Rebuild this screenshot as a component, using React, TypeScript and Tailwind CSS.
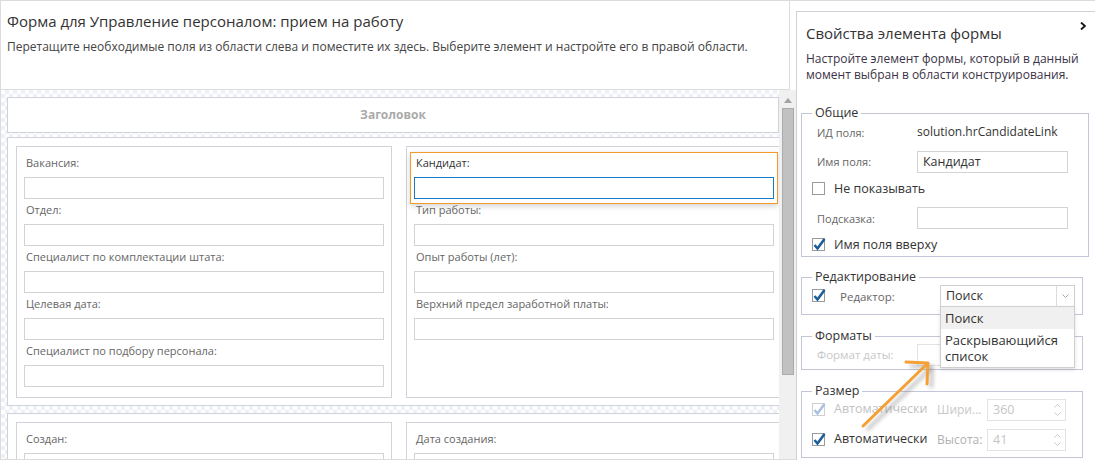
import React from "react";

const leftFields = [
  "Вакансия:",
  "Отдел:",
  "Специалист по комплектации штата:",
  "Целевая дата:",
  "Специалист по подбору персонала:",
];
const rightFields = ["Тип работы:", "Опыт работы (лет):", "Верхний предел заработной платы:"];

function Field({ label, selected }: { label: string; selected?: boolean }) {
  return (
    <div className="relative">
      {selected && (
        <div className="absolute -left-[4px] -right-[4px] top-0 -bottom-[5px] border border-[#f39a2b] shadow-[0_2px_6px_rgba(0,0,0,0.18)]" />
      )}
      <div className={`relative h-[25px] pt-[3px] pl-[2px] text-[11px] leading-[16px] ${selected ? "text-[#333]" : "text-[#666]"}`}>
        {label}
      </div>
      <div className={`relative h-[22px] bg-white border ${selected ? "border-[#1b79c4]" : "border-[#d3d3d3]"}`} />
    </div>
  );
}

function Column({ children }: { children: React.ReactNode }) {
  return <div className="w-[376px] h-[252px] shrink-0 border border-[#d0d3d9] bg-white pt-[5px] px-[7px]">{children}</div>;
}

function Check({ checked, disabled }: { checked?: boolean; disabled?: boolean }) {
  return (
    <svg width="14" height="14" viewBox="0 0 14 14" className="shrink-0 overflow-visible">
      <rect x="0.5" y="0.5" width="12" height="12" fill="white" stroke={disabled ? "#d0d0d0" : "#9a9a9a"} />
      {checked && (
        <path d="M2.5 7 L5.5 10.5 L12.5 1" fill="none" stroke={disabled ? "#a9c3de" : "#1c5d9b"} strokeWidth="2.6" />
      )}
    </svg>
  );
}

function Spin({ value }: { value: string }) {
  return (
    <div className="flex w-[79px] h-[22px] border border-[#e3e3e3] bg-white">
      <div className="flex-1 pl-[5px] text-[12.5px] leading-[20px] text-[#c4c4c4]">{value}</div>
      <div className="w-[15px] flex flex-col items-center justify-center gap-[4px]">
        <svg width="7" height="4" viewBox="0 0 7 4"><path d="M0.5 3.5 L3.5 0.5 L6.5 3.5" fill="none" stroke="#c8c8c8" /></svg>
        <svg width="7" height="4" viewBox="0 0 7 4"><path d="M0.5 0.5 L3.5 3.5 L6.5 0.5" fill="none" stroke="#c8c8c8" /></svg>
      </div>
    </div>
  );
}

export default function App() {
  const checker =
    "bg-[image:repeating-conic-gradient(#edf0f6_0%_25%,#ffffff_0%_50%)] bg-[length:8px_8px]";

  return (
    <div className="relative flex w-[1095px] h-[460px] overflow-hidden bg-white border-t border-[#dcdcdc] font-['Open_Sans',sans-serif]">
      {/* main designer */}
      <div className="w-[796px] shrink-0 flex flex-col border-l border-b border-[#dcdcdc]">
        <div className="h-[89px] w-[789px] shrink-0 border-r border-b border-[#dcdcdc] px-[6px]">
          <div className="pt-[10px] text-[15px] leading-[20px] text-[#333]">
            Форма для Управление персоналом: прием на работу
          </div>
          <div className="mt-[7px] text-[12px] leading-[18px] text-[#444]">
            Перетащите необходимые поля из области слева и поместите их здесь. Выберите элемент и настройте его в правой области.
          </div>
        </div>
        <div className="flex flex-1 min-h-0">
          <div className={`w-[778px] shrink-0 overflow-hidden pt-[7px] pl-[6px] ${checker}`}>
            <div className="w-[772px] h-[36px] border border-[#d0d3d9] bg-white flex items-center justify-center text-[12px] font-bold text-[#aaaaaa]">
              Заголовок
            </div>
            <div className="mt-[4px] w-[783px] h-[269px] border border-[#d0d3d9] bg-white pt-[8px] pl-[8px] flex gap-[14px]">
              <Column>
                {leftFields.map((f) => (
                  <Field key={f} label={f} />
                ))}
              </Column>
              <Column>
                <Field label="Кандидат:" selected />
                {rightFields.map((f) => (
                  <Field key={f} label={f} />
                ))}
              </Column>
            </div>
            <div className="mt-[7px] w-[783px] h-[100px] border border-[#d0d3d9] bg-white pt-[8px] pl-[8px] flex gap-[14px]">
              <Column>
                <Field label="Создан:" />
              </Column>
              <Column>
                <Field label="Дата создания:" />
              </Column>
            </div>
          </div>
          <div className="w-[17px] shrink-0 bg-[#f0f0f0] flex flex-col items-center">
            <svg width="8" height="5" viewBox="0 0 8 5" className="mt-[8px]">
              <path d="M0 5 L4 0 L8 5 Z" fill="#a3a3a3" />
            </svg>
            <div className="mt-[5px] w-[12px] h-[267px] bg-[#c1c1c1] border border-[#ababab]" />
          </div>
        </div>
      </div>

      {/* properties panel */}
      <div className="relative flex-1 mt-[10px] border-t border-l border-[#cfd1d9] bg-white text-[#333]">
        <svg width="6" height="8" viewBox="0 0 6 8" className="absolute right-[9px] top-[10px]">
          <path d="M1 0.5 L5 4 L1 7.5" fill="none" stroke="#111" strokeWidth="1.8" />
        </svg>
        <div className="pl-[9px] pt-[11px] text-[15px] leading-[20px]">Свойства элемента формы</div>
        <div className="pl-[9px] pr-[10px] mt-[8px] text-[12px] leading-[16px] text-[#3b3346]">
          Настройте элемент формы, который в данный момент выбран в области конструирования.
        </div>

        <fieldset className="ml-[4px] mt-[22px] w-[288px] border border-[#c3c6d6] pl-[15px] pb-[1px]">
          <legend className="ml-[-5px] px-[3px] text-[12.5px] leading-[16px]">Общие</legend>
          <div className="flex h-[21px] items-center">
            <div className="w-[100px] text-[11px] text-[#666] pt-[3px]">ИД поля:</div>
            <div className="text-[12px]">solution.hrCandidateLink</div>
          </div>
          <div className="flex mt-[9px] h-[22px] items-center">
            <div className="w-[100px] text-[11px] text-[#666]">Имя поля:</div>
            <div className="w-[151px] h-[22px] border border-[#d3d3d3] pl-[5px] text-[12.5px] leading-[20px]">Кандидат</div>
          </div>
          <div className="flex mt-[6px] h-[20px] items-center gap-[8px] -ml-[5px]">
            <Check />
            <span className="text-[12.5px]">Не показывать</span>
          </div>
          <div className="flex mt-[8px] h-[22px] items-center">
            <div className="w-[100px] text-[11px] text-[#666] pt-[2px]">Подсказка:</div>
            <div className="w-[151px] h-[22px] border border-[#d3d3d3]" />
          </div>
          <div className="flex mt-[6px] h-[20px] items-center gap-[8px] -ml-[5px]">
            <Check checked />
            <span className="text-[12.5px]">Имя поля вверху</span>
          </div>
        </fieldset>

        <fieldset className="ml-[4px] mt-[12px] w-[282px] border border-[#c3c6d6] pl-[10px] pb-[7px]">
          <legend className="ml-[0px] px-[3px] text-[12.5px] leading-[16px]">Редактирование</legend>
          <div className="flex h-[22px] items-center">
            <Check checked />
            <span className="ml-[14px] w-[100px] text-[11.5px] text-[#666] pt-[2px]">Редактор:</span>
            <div className="relative flex w-[135px] h-[22px] border border-[#cfcfcf] bg-white">
              <div className="flex-1 pl-[5px] text-[12.5px] leading-[20px]">Поиск</div>
              <div className="w-[18px] border-l border-[#dcdcdc] flex items-center justify-center">
                <svg width="7" height="4" viewBox="0 0 7 4"><path d="M0.5 0.5 L3.5 3.5 L6.5 0.5" fill="none" stroke="#aaa" /></svg>
              </div>
              <div className="absolute -left-[1px] -right-[1px] top-[20px] h-[62px] z-10 border border-[#cfcfcf] bg-white shadow-[0_2px_4px_rgba(0,0,0,0.12)] text-[13px] leading-[16px]">
                <div className="h-[22px] bg-[#f0f0f0] pl-[4px] flex items-center">Поиск</div>
                <div className="pl-[4px] pt-[3px]">Раскрывающийся<br />список</div>
              </div>
            </div>
          </div>
        </fieldset>

        <fieldset className="ml-[4px] mt-[13px] w-[282px] border border-[#c3c6d6] pl-[15px] pb-[4px]">
          <legend className="ml-[-5px] px-[3px] text-[12.5px] leading-[16px]">Форматы</legend>
          <div className="flex h-[21px] items-center">
            <div className="w-[100px] text-[11.5px] text-[#c8c8c8]">Формат даты:</div>
            <div className="w-[60px] h-[22px] border border-[#e3e3e3]" />
          </div>
        </fieldset>

        <fieldset className="ml-[4px] mt-[13px] w-[282px] border border-[#c3c6d6] pl-[10px] pb-[7px]">
          <legend className="ml-[0px] px-[3px] text-[12.5px] leading-[16px]">Размер</legend>
          <div className="flex h-[21px] items-center">
            <Check checked disabled />
            <span className="ml-[8px] w-[103px] text-[12.5px] text-[#c2c2c2]">Автоматически</span>
            <span className="w-[50px] text-[12px] text-[#c8c8c8]">Шири...</span>
            <Spin value="360" />
          </div>
          <div className="flex mt-[9px] h-[21px] items-center">
            <Check checked />
            <span className="ml-[8px] w-[103px] text-[12.5px] text-[#333]">Автоматически</span>
            <span className="w-[50px] text-[12px] text-[#b0b0b0]">Высота:</span>
            <Spin value="41" />
          </div>
        </fieldset>
      </div>

      {/* callout arrow */}
      <svg className="absolute left-0 top-0 pointer-events-none" width="1095" height="460" viewBox="0 0 1095 460">
        <defs>
          <filter id="blur" x="-20%" y="-20%" width="140%" height="140%">
            <feGaussianBlur stdDeviation="2" />
          </filter>
        </defs>
        <g transform="translate(4 4)" filter="url(#blur)" opacity="0.55">
          <path d="M863 425 L928 362 M906 361 L928 362 L927 383" fill="none" stroke="#777" strokeWidth="3" />
        </g>
        <path d="M863 425 L928 362 M906 361 L928 362 L927 383" fill="none" stroke="#f5a034" strokeWidth="3" strokeLinecap="round" strokeLinejoin="round" />
      </svg>
    </div>
  );
}
